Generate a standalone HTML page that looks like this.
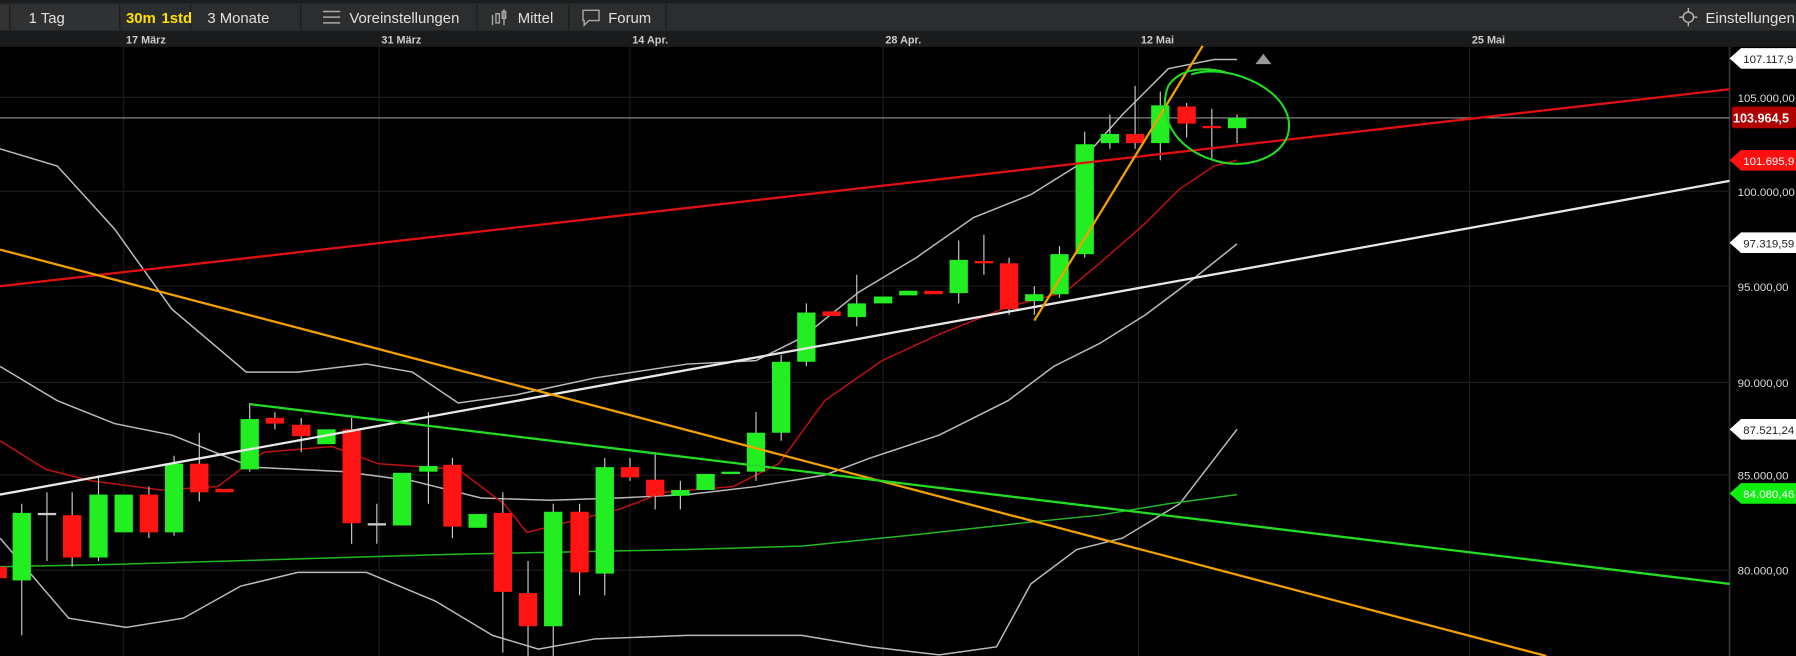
<!DOCTYPE html>
<html><head><meta charset="utf-8"><style>
html,body{margin:0;padding:0;background:#000;overflow:hidden}
svg{display:block}
text{font-family:"Liberation Sans",sans-serif}
</style></head><body>
<svg width="1796" height="656" viewBox="0 0 1568 573" preserveAspectRatio="none" xmlns="http://www.w3.org/2000/svg">
<rect width="1568" height="573" fill="#000"/>
<rect x="0" y="0" width="1568" height="27" fill="#2a2c2e"/>
<rect x="0" y="0" width="1568" height="3" fill="#1c1d1e"/>
<rect x="0" y="4" width="8" height="22" fill="#333"/>
<rect x="9" y="4" width="95" height="22" fill="#2f3133"/>
<rect x="104" y="4" width="1464" height="22" fill="#2b2d2f"/>
<g stroke="#1b1c1d" stroke-width="1"><line x1="8.5" y1="4" x2="8.5" y2="26"/><line x1="104.5" y1="4" x2="104.5" y2="26"/><line x1="166.5" y1="4" x2="166.5" y2="26"/><line x1="262.5" y1="4" x2="262.5" y2="26"/><line x1="416.5" y1="4" x2="416.5" y2="26"/><line x1="496.5" y1="4" x2="496.5" y2="26"/><line x1="581.5" y1="4" x2="581.5" y2="26"/></g>
<text x="25" y="20" fill="#e0e0e0" font-size="13">1 Tag</text>
<text x="110" y="20" fill="#ffe000" font-size="13" font-weight="bold">30m</text>
<text x="141" y="20" fill="#ffe000" font-size="13" font-weight="bold">1std</text>
<text x="181" y="20" fill="#e0e0e0" font-size="13">3 Monate</text>
<g stroke="#aaa" stroke-width="1.3"><line x1="282" y1="10" x2="297" y2="10"/><line x1="282" y1="15" x2="297" y2="15"/><line x1="282" y1="20" x2="297" y2="20"/></g>
<text x="305" y="20" fill="#e0e0e0" font-size="13">Voreinstellungen</text>
<g stroke="#aaa" stroke-width="1.2" fill="none"><line x1="430" y1="13" x2="430" y2="22"/><rect x="433" y="12" width="3" height="8"/><line x1="440" y1="8" x2="440" y2="22"/><rect x="438.5" y="10" width="3" height="6"/></g>
<text x="452" y="20" fill="#e0e0e0" font-size="13">Mittel</text>
<path d="M509 9h14v9h-9l-4 4v-4h-1z" fill="none" stroke="#aaa" stroke-width="1.2"/>
<text x="531" y="20" fill="#e0e0e0" font-size="13">Forum</text>
<circle cx="1474" cy="15" r="4.5" fill="none" stroke="#bbb" stroke-width="1.2"/>
<g stroke="#bbb" stroke-width="1.2"><line x1="1466" y1="15" x2="1469" y2="15"/><line x1="1479" y1="15" x2="1482" y2="15"/><line x1="1474" y1="7" x2="1474" y2="10"/><line x1="1474" y1="20" x2="1474" y2="23"/></g>
<text x="1489" y="20" fill="#e0e0e0" font-size="13">Einstellungen</text>
<rect x="0" y="27" width="1568" height="14" fill="#1a1b1c"/>
<g fill="#ccc" font-size="9.5" font-weight="bold"><text x="110" y="38">17 März</text><text x="333" y="38">31 März</text><text x="552" y="38">14 Apr.</text><text x="773" y="38">28 Apr.</text><text x="996" y="38">12 Mai</text><text x="1285" y="38">25 Mai</text></g>
<g stroke="#1e1e1e" stroke-width="1"><line x1="108" y1="41" x2="108" y2="573"/><line x1="331" y1="41" x2="331" y2="573"/><line x1="550" y1="41" x2="550" y2="573"/><line x1="771" y1="41" x2="771" y2="573"/><line x1="994" y1="41" x2="994" y2="573"/><line x1="1283" y1="41" x2="1283" y2="573"/>
<line x1="0" y1="85" x2="1510" y2="85"/><line x1="0" y1="167" x2="1510" y2="167"/><line x1="0" y1="250" x2="1510" y2="250"/><line x1="0" y1="334" x2="1510" y2="334"/><line x1="0" y1="415" x2="1510" y2="415"/><line x1="0" y1="498" x2="1510" y2="498"/></g>
<line x1="1510" y1="41" x2="1510" y2="573" stroke="#333" stroke-width="1.5"/>
<line x1="0" y1="103" x2="1510" y2="103" stroke="#bbb" stroke-width="0.8"/>
<g fill="none" stroke-width="1.3">
<polyline stroke="#bbb" points="0,130 50,145 100,200 150,270 215,325 260,325 320,318 360,325 400,352 450,345 520,330 600,318 660,315 700,295 750,255 800,225 850,190 900,170 940,145 980,100 1020,60 1060,52 1080,52"/>
<polyline stroke="#bbb" points="0,470 60,540 110,548 160,540 210,512 260,500 320,500 380,525 430,555 470,567 520,558 600,555 700,555 760,565 820,572 870,565 900,510 940,480 980,470 1030,440 1080,375"/>
<polyline stroke="#bbb" points="0,320 50,350 100,370 150,380 220,408 300,412 360,420 420,435 480,437 540,435 600,432 660,425 720,415 760,400 820,380 880,350 920,320 960,300 1000,275 1040,245 1080,213"/>
<polyline stroke="#c01010" points="0,385 40,410 80,420 140,428 190,425 230,395 290,390 330,405 400,410 440,440 460,465 500,455 540,445 580,430 640,425 680,405 720,350 770,315 820,292 880,268 930,255 960,230 1000,195 1030,165 1060,145 1080,140"/>
<polyline stroke="#22b822" points="0,495 100,493 200,490 300,487 400,484 500,482 600,480 700,477 800,467 900,456 960,450 1020,440 1080,432"/>
</g>
<g stroke-width="1">
<g stroke="#ccc">
<line x1="19" y1="440" x2="19" y2="555"/><line x1="41" y1="430" x2="41" y2="490"/><line x1="86" y1="415" x2="86" y2="490"/><line x1="174" y1="378" x2="174" y2="438"/><line x1="218" y1="352" x2="218" y2="412"/><line x1="307" y1="365" x2="307" y2="475"/><line x1="374" y1="360" x2="374" y2="440"/><line x1="439" y1="430" x2="439" y2="570"/><line x1="461" y1="490" x2="461" y2="573"/><line x1="483" y1="440" x2="483" y2="573"/><line x1="506" y1="440" x2="506" y2="520"/><line x1="528" y1="400" x2="528" y2="520"/><line x1="572" y1="395" x2="572" y2="445"/><line x1="660" y1="360" x2="660" y2="420"/><line x1="682" y1="310" x2="682" y2="385"/><line x1="748" y1="240" x2="748" y2="285"/><line x1="837" y1="210" x2="837" y2="265"/><line x1="859" y1="205" x2="859" y2="240"/><line x1="903" y1="250" x2="903" y2="275"/><line x1="991" y1="75" x2="991" y2="130"/><line x1="1013" y1="80" x2="1013" y2="140"/><line x1="1036" y1="90" x2="1036" y2="120"/><line x1="1058" y1="95" x2="1058" y2="140"/><line x1="1080" y1="100" x2="1080" y2="125"/>
<line x1="63" y1="430" x2="63" y2="495"/><line x1="130" y1="425" x2="130" y2="470"/><line x1="152" y1="398" x2="152" y2="468"/><line x1="240" y1="360" x2="240" y2="375"/><line x1="263" y1="365" x2="263" y2="395"/><line x1="329" y1="440" x2="329" y2="475"/><line x1="395" y1="400" x2="395" y2="470"/><line x1="550" y1="400" x2="550" y2="420"/><line x1="594" y1="420" x2="594" y2="445"/><line x1="704" y1="265" x2="704" y2="320"/><line x1="881" y1="225" x2="881" y2="275"/><line x1="925" y1="215" x2="925" y2="260"/><line x1="947" y1="115" x2="947" y2="225"/><line x1="969" y1="100" x2="969" y2="130"/>
</g>
<g fill="#ff1414">
<rect x="-8" y="495" width="14" height="10"/><rect x="55" y="450" width="16" height="37"/><rect x="122" y="432" width="16" height="33"/><rect x="166" y="405" width="16" height="25"/><rect x="188" y="427" width="16" height="3"/><rect x="232" y="365" width="16" height="5"/><rect x="255" y="371" width="16" height="10"/><rect x="299" y="375" width="16" height="82"/><rect x="387" y="406" width="16" height="54"/><rect x="431" y="448" width="16" height="69"/><rect x="453" y="518" width="16" height="29"/><rect x="498" y="447" width="16" height="53"/><rect x="542" y="408" width="16" height="9"/><rect x="564" y="419" width="16" height="14"/><rect x="718" y="272" width="16" height="4"/><rect x="807" y="254" width="16" height="3"/><rect x="851" y="228" width="16" height="2"/><rect x="873" y="230" width="16" height="40"/><rect x="983" y="117" width="16" height="8"/><rect x="1028" y="93" width="16" height="15"/><rect x="1050" y="110" width="16" height="2"/>
</g>
<g fill="#22ee22">
<rect x="11" y="448" width="16" height="59"/><rect x="33" y="448" width="16" height="2" fill="#ccc"/><rect x="78" y="432" width="16" height="55"/><rect x="100" y="432" width="16" height="33"/><rect x="144" y="405" width="16" height="60"/><rect x="210" y="366" width="16" height="44"/><rect x="277" y="375" width="16" height="13"/><rect x="321" y="457" width="16" height="2" fill="#ccc"/><rect x="343" y="413" width="16" height="46"/><rect x="366" y="407" width="16" height="5"/><rect x="409" y="449" width="16" height="12"/><rect x="475" y="447" width="16" height="100"/><rect x="520" y="408" width="16" height="93"/><rect x="586" y="428" width="16" height="5"/><rect x="608" y="414" width="16" height="14"/><rect x="630" y="412" width="16" height="2"/><rect x="652" y="378" width="16" height="34"/><rect x="674" y="316" width="16" height="62"/><rect x="696" y="273" width="16" height="43"/><rect x="740" y="265" width="16" height="12"/><rect x="763" y="259" width="16" height="6"/><rect x="785" y="254" width="16" height="4"/><rect x="829" y="227" width="16" height="29"/><rect x="895" y="257" width="16" height="6"/><rect x="917" y="222" width="16" height="35"/><rect x="939" y="126" width="16" height="96"/><rect x="961" y="117" width="16" height="8"/><rect x="1005" y="92" width="16" height="33"/><rect x="1072" y="103" width="16" height="9"/>
</g>
</g>
<g fill="none" stroke-width="2">
<line x1="0" y1="250" x2="1510" y2="78" stroke="#e01010"/>
<line x1="0" y1="432" x2="1510" y2="158" stroke="#e8e8e8"/>
<line x1="0" y1="218" x2="1350" y2="573" stroke="#f0a000"/>
<line x1="218" y1="353" x2="1510" y2="510" stroke="#22dd22"/>
<line x1="903" y1="280" x2="1050" y2="40" stroke="#f0a000"/>
<path d="M1040 65 C1070 55 1120 75 1125 105 C1130 135 1090 150 1060 140 C1025 130 1010 100 1020 75 C1030 60 1050 58 1070 63" stroke="#22dd22" stroke-width="1.8"/>
</g>
<path d="M1096 56 L1103 47 L1110 56 Z" fill="#999"/>
<g font-size="10" fill="#ddd">
<text x="1517" y="89">105.000,00</text><text x="1517" y="171">100.000,00</text><text x="1517" y="254">95.000,00</text><text x="1517" y="338">90.000,00</text><text x="1517" y="419">85.000,00</text><text x="1517" y="502">80.000,00</text>
</g>
<g font-size="10">
<path d="M1510 51 L1520 42 L1568 42 L1568 60 L1520 60 Z" fill="#fff"/><text x="1522" y="55" fill="#222">107.117,9</text>
<rect x="1512" y="93" width="56" height="19" rx="2" fill="#b00000"/><text x="1513" y="107" fill="#fff" font-weight="bold" font-size="11">103.964,5</text>
<path d="M1510 140 L1520 131 L1568 131 L1568 149 L1520 149 Z" fill="#ff1010"/><text x="1522" y="144" fill="#fff">101.695,9</text>
<path d="M1510 212 L1520 203 L1568 203 L1568 221 L1520 221 Z" fill="#fff"/><text x="1522" y="216" fill="#222">97.319,59</text>
<path d="M1510 375 L1520 366 L1568 366 L1568 384 L1520 384 Z" fill="#fff"/><text x="1522" y="379" fill="#222">87.521,24</text>
<path d="M1510 431 L1520 422 L1568 422 L1568 440 L1520 440 Z" fill="#10ee10"/><text x="1522" y="435" fill="#fff">84.080,46</text>
</g>
</svg>
</body></html>
